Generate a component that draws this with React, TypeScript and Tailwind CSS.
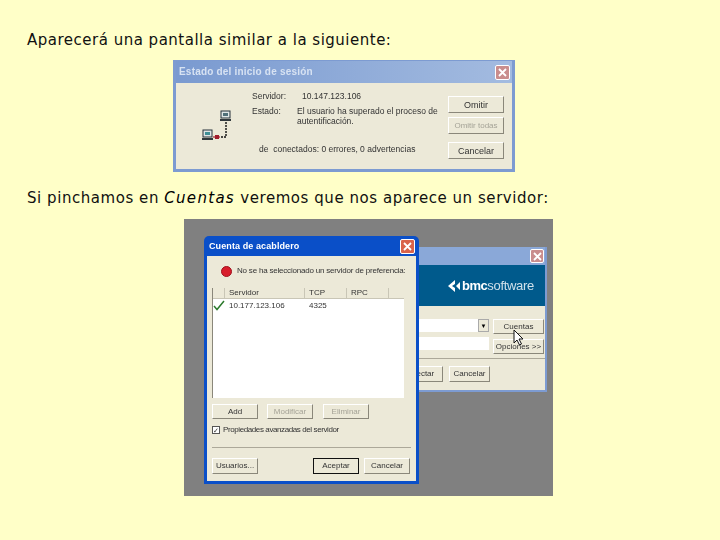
import type { ReactNode } from "react"

const ui = "font-['Liberation_Sans',Arial,sans-serif] text-[9px] leading-[10px] text-[#333]"

function XpButton({ label, className = "", off = false, strong = false }: { label: string; className?: string; off?: boolean; strong?: boolean }) {
  return (
    <div
      className={`flex items-center justify-center whitespace-nowrap bg-[#ece9d8] ${strong ? "border border-[#111]" : "border border-t-white border-l-white border-r-[#8a877a] border-b-[#8a877a]"} ${off ? "text-[#a5a397]" : "text-[#333]"} ${className}`}
    >
      {label}
    </div>
  )
}

function CloseBox({ className = "" }: { className?: string }) {
  return (
    <div className={`flex items-center justify-center rounded-[2px] border border-white ${className}`}>
      <svg width="9" height="9" viewBox="0 0 9 9">
        <path d="M1 1 L8 8 M8 1 L1 8" stroke="#fff" strokeWidth="1.8" />
      </svg>
    </div>
  )
}

function NetworkIcon() {
  return (
    <svg width="30" height="34" viewBox="0 0 30 34" className="shrink-0">
      <rect x="19" y="1" width="9" height="7" fill="#dfe6e6" stroke="#26333a" />
      <rect x="21" y="3" width="5" height="3" fill="#4f6f78" />
      <rect x="18" y="9" width="11" height="2" fill="#30383c" />
      <path d="M24 12 V27 H18" stroke="#111" strokeWidth="1.4" strokeDasharray="2 1" fill="none" />
      <rect x="1" y="20" width="9" height="7" fill="#dfe6e6" stroke="#26333a" />
      <rect x="3" y="22" width="5" height="3" fill="#3f8f96" />
      <rect x="0" y="28" width="11" height="2" fill="#30383c" />
      <path d="M11 27 H18" stroke="#a01c2c" strokeWidth="1.2" />
      <rect x="13" y="25" width="4" height="4" fill="#a01c2c" />
    </svg>
  )
}

function LoginStatus() {
  return (
    <div className={`w-[342px] h-[112px] flex flex-col bg-[#7d9bd1] px-[3px] pb-[3px] pt-[1px] blur-[0.4px] ${ui}`}>
      <div className="h-[22px] flex items-center justify-between pl-[3px] pr-[2px] bg-gradient-to-r from-[#7a9ad0] to-[#a3bbe0]">
        <span className="font-bold text-[10px] tracking-[0.2px] text-[#d7e2f2]">Estado del inicio de sesión</span>
        <CloseBox className="w-[15px] h-[15px] bg-[#c98d8d]" />
      </div>
      <div className="flex-1 flex bg-[#ece9d8]">
        <div className="w-[26px]" />
        <div className="w-[32px] pt-[27px]">
          <NetworkIcon />
        </div>
        <div className="w-[214px] flex flex-col pl-[18px] pt-[8px] text-[8.5px]">
          <div className="flex">
            <span className="w-[50px]">Servidor:</span>
            <span>10.147.123.106</span>
          </div>
          <div className="flex mt-[5px]">
            <span className="w-[45px] shrink-0">Estado:</span>
            <span className="w-[150px]">El usuario ha superado el proceso de autentificación.</span>
          </div>
          <div className="mt-[18px] pl-[7px] whitespace-nowrap">de &nbsp;conectados: 0 errores, 0 advertencias</div>
        </div>
        <div className="w-[56px] flex flex-col pt-[13px]">
          <XpButton label="Omitir" className="h-[17px] w-[56px]" />
          <XpButton label="Omitir todas" off className="h-[17px] w-[56px] mt-[4px] text-[8px]" />
          <XpButton label="Cancelar" className="h-[17px] w-[56px] mt-[8px]" />
        </div>
      </div>
    </div>
  )
}

function RearWindow() {
  return (
    <div className={`absolute left-[100px] top-[28px] w-[263px] h-[145px] flex flex-col bg-[#7d9bd1] p-[2px] pt-0 ${ui}`}>
      <div className="h-[18px] shrink-0 flex items-center justify-end pr-[1px] bg-[#8aa8d8]">
        <CloseBox className="w-[14px] h-[14px] bg-[#c98d8d]" />
      </div>
      <div className="h-[41px] shrink-0 flex items-center justify-end pr-[11px] bg-[#005a8c] text-white">
        <svg width="13" height="12" viewBox="0 0 13 12" className="mr-[1px]">
          <path d="M7 0 L0 6 L7 12 L7 8 L4 6 L7 4 Z M12 2 L8 6 L12 10 Z" fill="#fff" />
        </svg>
        <span className="text-[13px] leading-none font-bold tracking-[-0.5px]">bmc</span>
        <span className="text-[13px] leading-none tracking-[-0.3px] text-[#cfe0ea]">software</span>
      </div>
      <div className="flex-1 flex flex-col bg-[#ece9d8]">
        <div className="flex justify-end pt-[13px] pr-[1px]">
          <div className="flex flex-col mr-[4px]">
            <div className="w-[120px] h-[13px] bg-white flex justify-end">
              <div className="w-[11px] h-[13px] flex items-center justify-center bg-[#ece9d8] border border-[#aaa] text-[6px] text-black">▼</div>
            </div>
            <div className="w-[120px] h-[13px] bg-white mt-[5px]" />
          </div>
          <div className="flex flex-col">
            <XpButton label="Cuentas" className="w-[51px] h-[15px] text-[8px]" />
            <XpButton label="Opciones >>" className="w-[51px] h-[15px] mt-[5px] text-[8px]" />
          </div>
        </div>
        <div className="h-px bg-[#aca899] mt-[4px]" />
        <div className="flex justify-end gap-[6px] pt-[7px] pr-[55px]">
          <XpButton label="Conectar" className="w-[50px] h-[16px] text-[8px]" />
          <XpButton label="Cancelar" className="w-[41px] h-[16px] text-[8px]" />
        </div>
      </div>
    </div>
  )
}

function ListCols({ a, b, c, head = false }: { a: ReactNode; b: string; c: string; head?: boolean }) {
  const cell = head ? "border-r border-[#c9c6b6] pl-[4px]" : "pl-[4px]"
  return (
    <div className={`flex text-[8px] ${head ? "h-[11px] items-center bg-[#ece9d8] border-b border-[#c9c6b6]" : "h-[13px] items-center"}`}>
      <div className={`w-[12px] ${head ? "h-full border-r border-[#c9c6b6]" : ""}`}>{a}</div>
      <div className={`w-[80px] ${cell}`}>{head ? "Servidor" : "10.177.123.106"}</div>
      <div className={`w-[42px] ${cell}`}>{b}</div>
      <div className={`w-[42px] ${cell}`}>{c}</div>
      <div className="flex-1" />
    </div>
  )
}

function AccountWindow() {
  return (
    <div className={`absolute left-[20px] top-[17px] w-[215px] h-[248px] flex flex-col rounded-t-[5px] bg-[#0a4fc8] px-[3px] pb-[3px] ${ui}`}>
      <div className="h-[20px] shrink-0 flex items-center justify-between pl-[2px] pr-[1px]">
        <span className="font-bold text-[9px] tracking-[0.1px] text-white">Cuenta de acabldero</span>
        <CloseBox className="w-[15px] h-[15px] bg-[#d9634a]" />
      </div>
      <div className="flex-1 flex flex-col bg-[#ece9d8] px-[5px]">
        <div className="flex items-center h-[27px] pt-[3px] pl-[9px]">
          <div className="w-[11px] h-[11px] shrink-0 rounded-full bg-[#d81e2c] border border-[#a0101c]" />
          <span className="ml-[5px] whitespace-nowrap text-[8px] tracking-[-0.2px]">No se ha seleccionado un servidor de preferencia:</span>
        </div>
        <div className="h-[110px] mt-[5px] mr-[7px] bg-white border-l border-[#8a877a] overflow-hidden">
          <ListCols head a="" b="TCP" c="RPC" />
          <ListCols
            a={
              <svg width="12" height="11" viewBox="0 0 12 11">
                <path d="M1 6 L4 9.5 L11 1" stroke="#2c7a2c" strokeWidth="1.5" fill="none" />
              </svg>
            }
            b="4325"
            c=""
          />
        </div>
        <div className="flex mt-[6px]">
          <XpButton label="Add" className="w-[46px] h-[15px] text-[8px]" />
          <XpButton label="Modificar" off className="w-[46px] h-[15px] ml-[9px] text-[8px]" />
          <XpButton label="Eliminar" off className="w-[46px] h-[15px] ml-[10px] text-[8px]" />
        </div>
        <div className="flex items-center mt-[6px]">
          <div className="w-[8px] h-[8px] flex items-center justify-center bg-white border border-[#555] text-[7px] leading-none">✓</div>
          <span className="ml-[3px] whitespace-nowrap text-[8px] tracking-[-0.4px]">Propiedades avanzadas del servidor</span>
        </div>
        <div className="h-px bg-[#aca899] mt-[12px]" />
        <div className="flex mt-[10px]">
          <XpButton label="Usuarios..." className="w-[46px] h-[16px] text-[8px]" />
          <XpButton label="Aceptar" strong className="w-[46px] h-[16px] ml-[55px] text-[8px]" />
          <XpButton label="Cancelar" className="w-[46px] h-[16px] ml-[5px] text-[8px]" />
        </div>
      </div>
    </div>
  )
}

function Cursor() {
  return (
    <svg width="12" height="17" viewBox="0 0 12 17" className="absolute left-[329px] top-[110px]">
      <path d="M1 1 V14 L4 11 L6.5 16 L8.5 15 L6 10 H10 Z" fill="#fff" stroke="#111" strokeWidth="1" />
    </svg>
  )
}

export default function App() {
  return (
    <div className="w-[720px] h-[540px] overflow-hidden bg-[#ffffc8] pt-[31px] font-['DejaVu_Sans',Verdana,sans-serif] text-[15px] leading-[18px] text-[#111]">
      <p className="pl-[27px] tracking-[0.5px]">Aparecerá una pantalla similar a la siguiente:</p>
      <div className="pl-[173px] mt-[11px]">
        <LoginStatus />
      </div>
      <p className="pl-[27px] mt-[17px] tracking-[0.55px]">
        Si pinchamos en <em className="text-black tracking-[1.3px]">Cuentas</em> veremos que nos aparece un servidor:
      </p>
      <div className="ml-[184px] mt-[12px] relative w-[369px] h-[277px] bg-[#808080] blur-[0.4px]">
        <RearWindow />
        <AccountWindow />
        <Cursor />
      </div>
    </div>
  )
}
